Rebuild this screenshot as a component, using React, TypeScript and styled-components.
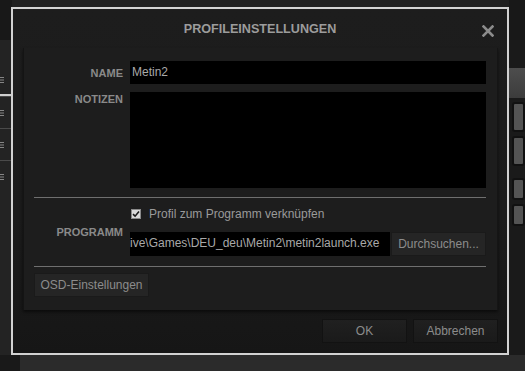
import React from "react";
import styled, {createGlobalStyle} from "styled-components";

const GlobalStyle = createGlobalStyle`
  html, body {
    margin: 0;
    padding: 0;
    background: #1f1f1f;
    font-family: "Liberation Sans", Arial, sans-serif;
  }
  * { box-sizing: border-box; }
`;

const MenuGlyph = () => (
    <svg width="6" height="8" viewBox="0 0 6 8">
        <path d="M0 1.5 H6 M0 4 H6 M0 6.5 H6" stroke="#858585" strokeWidth="1"/>
    </svg>
);

function App() {
    return (
        <>
            <GlobalStyle/>
            <Screen>
                <Backdrop>
                    <LeftRail>
                        <RailTop/>
                        {[0, 1, 2, 3].map(i => (
                            <RailRow key={i} highlight={i === 0}>
                                <MenuGlyph/>
                            </RailRow>
                        ))}
                    </LeftRail>
                    <Middle/>
                    <RightRail>
                        <RailTop/>
                        <RightBar/>
                        <RightKey tall/>
                        <RightKey tall/>
                        <RightGap/>
                        <RightKey/>
                        <RightKey/>
                    </RightRail>
                </Backdrop>
                <BottomStrip/>

                <Dialog>
                    <Header>
                        <Title>PROFILEINSTELLUNGEN</Title>
                        <Close aria-label="close">
                            <svg width="12" height="12" viewBox="0 0 12 12">
                                <path d="M1.5 1.5 L10.5 10.5 M10.5 1.5 L1.5 10.5" stroke="#8c8c8c" strokeWidth="2.6"
                                      strokeLinecap="square"/>
                            </svg>
                        </Close>
                    </Header>
                    <Panel>
                        <Field>
                            <Label>NAME</Label>
                            <TextBox>Metin2</TextBox>
                        </Field>
                        <Field top>
                            <Label top>NOTIZEN</Label>
                            <NotesBox/>
                        </Field>
                        <Separator/>
                        <Field program>
                            <Label>PROGRAMM</Label>
                            <ProgramStack>
                                <CheckRow>
                                    <CheckBox>
                                        <svg width="8" height="8" viewBox="0 0 8 8">
                                            <path d="M1 4.2 L3.1 6.2 L7 1.6" stroke="#1a1a1a" strokeWidth="1.6"
                                                  fill="none"/>
                                        </svg>
                                    </CheckBox>
                                    <CheckText>Profil zum Programm verknüpfen</CheckText>
                                </CheckRow>
                                <PathRow>
                                    <PathBox>ive\Games\DEU_deu\Metin2\metin2launch.exe</PathBox>
                                    <DarkButton wide={95}>Durchsuchen...</DarkButton>
                                </PathRow>
                            </ProgramStack>
                        </Field>
                        <Separator second/>
                        <OsdRow>
                            <DarkButton wide={115}>OSD-Einstellungen</DarkButton>
                        </OsdRow>
                    </Panel>
                    <Footer>
                        <FooterButton>OK</FooterButton>
                        <FooterButton>Abbrechen</FooterButton>
                    </Footer>
                </Dialog>
            </Screen>
        </>
    );
}

const Screen = styled.div`
  position: relative;
  width: 525px;
  height: 371px;
  overflow: hidden;
  display: flex;
  flex-direction: column;
  background: #1f1f1f;
`

const Backdrop = styled.div`
  display: flex;
  height: 355px;
`

const LeftRail = styled.div`
  width: 12px;
  background: #232323;
  display: flex;
  flex-direction: column;
`

const RailTop = styled.div`
  height: 40px;
  background: #181818;
  flex: none;
`

const RailRow = styled.div<{highlight?: boolean}>`
  height: 32px;
  display: flex;
  align-items: center;
  margin-left: -2px;
  border-top: 1px solid ${({highlight}) => highlight ? "transparent" : "#4a4a4a"};
  border-bottom: ${({highlight}) => highlight ? "2px solid #cfcfcf" : "none"};
  margin-top: ${({highlight}) => highlight ? "24px" : "0"};
`

const Middle = styled.div`
  flex: 1;
`

const RightRail = styled.div`
  width: 16px;
  margin-left: auto;
  background: #1a1a1a;
  display: flex;
  flex-direction: column;
  gap: 4px;
`

const RightBar = styled.div`
  height: 30px;
  margin-top: 24px;
  background: linear-gradient(#4d4d4d, #3c3c3c);
`

const RightKey = styled.div<{tall?: boolean}>`
  height: ${({tall}) => tall ? "30px" : "22px"};
  margin-left: 3px;
  border-radius: 3px;
  background: #545454;
  border: 2px solid #111;
`

const RightGap = styled.div`
  height: 4px;
`

const BottomStrip = styled.div`
  flex: 1;
  background: linear-gradient(90deg, #191919 0 20px, #2b2b2b 20px);
`

const Dialog = styled.div`
  position: absolute;
  left: 11px;
  top: 7px;
  width: 498px;
  height: 348px;
  border: 2px solid #d2d2d2;
  background: linear-gradient(#1d1d1d, #1b1b1b 60%, #161616);
  display: flex;
  flex-direction: column;
`

const Header = styled.div`
  position: relative;
  height: 39px;
  display: flex;
  align-items: center;
  justify-content: center;
`

const Title = styled.div`
  font-size: 12.6px;
  font-weight: bold;
  color: #9c9c9c;
  padding-top: 1px;
`

const Close = styled.div`
  position: absolute;
  right: 13px;
  top: 16px;
  width: 12px;
  height: 12px;
  display: flex;
`

const Panel = styled.div`
  margin: 0 9px 0 10px;
  height: 262px;
  padding: 13px 11px 13px 10px;
  background: #1d1d1d;
  border-left: 1px solid #141414;
  border-right: 1px solid #151515;
  box-shadow: 0 2px 3px rgba(0, 0, 0, 0.55);
  display: flex;
  flex-direction: column;
`

const Field = styled.div<{top?: boolean, program?: boolean}>`
  display: grid;
  grid-template-columns: 89px 1fr;
  column-gap: 7px;
  align-items: ${({top}) => top ? "start" : "center"};
  margin-top: ${({top, program}) => top ? "8px" : program ? "11px" : "0"};
`

const Label = styled.div<{top?: boolean}>`
  text-align: right;
  font-size: 11px;
  font-weight: bold;
  color: #8a8a8a;
  padding-top: ${({top}) => top ? "1px" : "0"};
`

const TextBox = styled.div`
  height: 23px;
  background: #000;
  color: #a9a9a9;
  font-size: 12px;
  line-height: 23px;
  padding-left: 2px;
`

const NotesBox = styled.div`
  height: 96px;
  background: #000;
`

const Separator = styled.div<{second?: boolean}>`
  height: 1px;
  background: #6f6f6f;
  margin-top: ${({second}) => second ? "10px" : "9px"};
`

const ProgramStack = styled.div`
  display: flex;
  flex-direction: column;
  gap: 12px;
`

const CheckRow = styled.div`
  display: flex;
  align-items: center;
  gap: 8px;
  height: 11px;
  padding-left: 1px;
`

const CheckBox = styled.div`
  width: 10px;
  height: 10px;
  background: #d9d9d9;
  border: 1px solid #8a8a8a;
  display: flex;
  align-items: center;
  justify-content: center;
`

const CheckText = styled.span`
  font-size: 12px;
  color: #9a9a9a;
`

const PathRow = styled.div`
  display: flex;
  height: 24px;
  gap: 1px;
`

const PathBox = styled.div`
  flex: 1;
  background: #000;
  color: #a9a9a9;
  font-size: 12px;
  line-height: 23px;
  white-space: nowrap;
  overflow: hidden;
`

const DarkButton = styled.div<{wide: number}>`
  width: ${({wide}) => wide}px;
  height: 24px;
  background: #252525;
  border: 1px solid #1a1a1a;
  color: #8c8c8c;
  font-size: 12px;
  line-height: 22px;
  text-align: center;
  white-space: nowrap;
  flex: none;
`

const OsdRow = styled.div`
  display: flex;
  margin-top: 7px;
`

const Footer = styled.div`
  display: flex;
  justify-content: flex-end;
  gap: 6px;
  padding: 9px 9px 0 0;
`

const FooterButton = styled.div`
  width: 85px;
  height: 24px;
  background: linear-gradient(#202020, #1a1a1a);
  border: 1px solid #121212;
  color: #8c8c8c;
  font-size: 12px;
  line-height: 22px;
  text-align: center;
`

export default App;
